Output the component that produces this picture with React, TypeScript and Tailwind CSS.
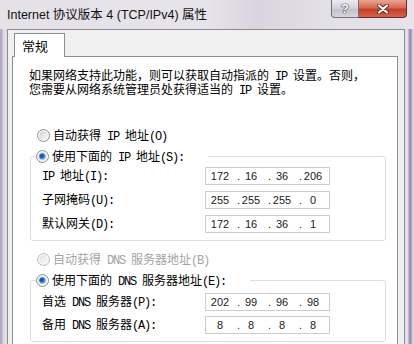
import { useId } from "react";

const ASCII = /^[\x20-\x7e]+$/;

// SimSun-like look: CJK from Noto, ASCII as half-width serif mono
function Mixed({ text }: { text: string }) {
  const parts = text.match(/[\x20-\x7e]+|[^\x20-\x7e]+/g) ?? [];
  return (
    <>
      {parts.map((p, i) =>
        ASCII.test(p) ? (
          <span key={i} className="font-['Liberation_Mono',monospace] text-[12px] tracking-[-1.2px] whitespace-pre">
            {p}
          </span>
        ) : (
          <span key={i}>{p}</span>
        )
      )}
    </>
  );
}

function Radio({ checked = false, disabled = false }: { checked?: boolean; disabled?: boolean }) {
  const id = useId().replace(/:/g, "");
  return (
    <svg width="13" height="13" viewBox="0 0 13 13" className="shrink-0">
      <defs>
        <linearGradient id={`o${id}`} x1="0" y1="0" x2="1" y2="1">
          <stop offset="0" stopColor={disabled ? "#e4e4e4" : "#cfcfcf"} />
          <stop offset="1" stopColor={disabled ? "#f8f8f8" : "#fdfdfd"} />
        </linearGradient>
        <radialGradient id={`d${id}`} cx="0.4" cy="0.4" r="0.6">
          <stop offset="0" stopColor="#0b3f78" />
          <stop offset="0.55" stopColor="#2a74bd" />
          <stop offset="1" stopColor="#8cc4ef" />
        </radialGradient>
      </defs>
      <circle cx="6.5" cy="6.5" r="6" fill="#f6f6f6" stroke={disabled ? "#bcbcbc" : "#8e8f8f"} />
      <circle cx="6.5" cy="6.5" r="4.3" fill={`url(#o${id})`} />
      {checked && <circle cx="6.5" cy="6.5" r="3.3" fill={`url(#d${id})`} />}
    </svg>
  );
}

function IpBox({ ip }: { ip: string[] }) {
  return (
    <div className="flex items-center w-[125px] h-[18px] border border-[#cdcdcd] bg-white pl-[3px] font-['Liberation_Sans',sans-serif] text-[11px] text-[#1a1a1a]">
      {ip.map((v, i) => (
        <div key={i} className="flex">
          <span className="w-[22px] text-center">{v}</span>
          {i < 3 && <span className="w-[9px] text-right">.</span>}
        </div>
      ))}
    </div>
  );
}

function Row({ label, ip }: { label: string; ip: string[] }) {
  return (
    <div className="flex items-center h-[18px]">
      <div className="w-[174px] pl-[11px]">
        <Mixed text={label} />
      </div>
      <IpBox ip={ip} />
    </div>
  );
}

function Group({
  label,
  rows,
  gapClass,
  topClass,
  bottomClass,
}: {
  label: string;
  rows: { label: string; ip: string[] }[];
  gapClass: string;
  topClass: string;
  bottomClass: string;
}) {
  return (
    <fieldset className={`ml-[17px] w-[356px] border border-[#d5dfe5] rounded-[3px] ${bottomClass}`}>
      <legend className="ml-[5px] pr-[24px] h-[15px]">
        <div className="flex items-center gap-[3px] h-[15px] leading-[15px]">
          <Radio checked />
          <span>
            <Mixed text={label} />
          </span>
        </div>
      </legend>
      <div className={`flex flex-col ${gapClass} ${topClass}`}>
        {rows.map((r) => (
          <Row key={r.label} label={r.label} ip={r.ip} />
        ))}
      </div>
    </fieldset>
  );
}

export default function App() {
  return (
    <div className="w-[414px] h-[344px] overflow-hidden flex flex-col bg-[#e2dfe7] font-['Noto_Sans_CJK_SC',sans-serif] text-[12px] text-black">
      {/* Title bar */}
      <div className="flex h-[29px] shrink-0 bg-[linear-gradient(90deg,#e4e1e8_0%,#e6e3ea_50%,#d9d5e0_62%,#e4e0e8_80%,#e8e2ea_100%)]">
        <div className="pl-[7px] pt-[7px] leading-[16px] font-['Liberation_Sans','Noto_Sans_CJK_SC',sans-serif] text-[12.5px] text-[#111]">
          Internet 协议版本 4 (TCP/IPv4) 属性
        </div>
        <div className="ml-auto mr-[7px] flex h-[18px]">
          <div className="w-[28px] h-[18px] flex items-center justify-center border border-[#6f6f78] border-t-0 rounded-bl-[4px] bg-[linear-gradient(180deg,#eceaf0_0%,#d3d1d8_50%,#c3c1c9_55%,#d8d6dc_100%)]">
            <span className="font-['Liberation_Sans',sans-serif] font-bold text-[13px] leading-none text-white [text-shadow:0_0_1px_#333,0_0_1px_#333,0_0_1px_#333]">
              ?
            </span>
          </div>
          <div className="w-[48px] h-[18px] flex items-center justify-center border border-[#6a2c24] border-t-0 border-l-0 rounded-br-[4px] bg-[linear-gradient(180deg,#e9a595_0%,#d66b55_45%,#c23d26_55%,#d8644c_100%)]">
            <svg width="12" height="10" viewBox="0 0 12 10">
              <path d="M2 1.5 L10 8.5 M10 1.5 L2 8.5" stroke="#5a2a25" strokeWidth="4" strokeLinecap="round" />
              <path d="M2 1.5 L10 8.5 M10 1.5 L2 8.5" stroke="#ffffff" strokeWidth="2.2" strokeLinecap="round" />
            </svg>
          </div>
        </div>
      </div>

      {/* Frame + dialog body */}
      <div className="flex flex-1">
        <div className="w-[7px] shrink-0 bg-[linear-gradient(90deg,#b5abc0_0px,#b5abc0_2px,#ddd8e3_3px,#e4e0e8_7px)]" />
        <div className="w-[398px] shrink-0 border border-b-0 border-[#8d8b92] bg-[#f0f0f0] flex flex-col">
          {/* Tab */}
          <div className="pl-[6px] pt-[3px]">
            <div className="relative z-10 w-[51px] h-[24px] -mb-[1px] border border-b-0 border-[#8c8e94] bg-white pl-[7px] pt-[4px] leading-[16px] text-[13px]">
              常规
            </div>
          </div>
          {/* Tab panel */}
          <div className="ml-[4px] w-[386px] flex-1 border border-b-0 border-[#8c8e94] bg-white flex flex-col">
            <p className="mt-[12px] ml-[16px] leading-[12px]">
              <Mixed text="如果网络支持此功能，则可以获取自动指派的 IP 设置。否则，" />
              <br />
              <Mixed text="您需要从网络系统管理员处获得适当的 IP 设置。" />
            </p>

            <div className="mt-[31px] ml-[24px] flex items-center gap-[3px] h-[15px] leading-[15px]">
              <Radio />
              <span>
                <Mixed text="自动获得 IP 地址(O)" />
              </span>
            </div>

            <div className="mt-[6px]">
              <Group
                label="使用下面的 IP 地址(S):"
                gapClass="gap-[6px]"
                topClass="mt-[3px]"
                bottomClass="pb-[7px]"
                rows={[
                  { label: "IP 地址(I):", ip: ["172", "16", "36", "206"] },
                  { label: "子网掩码(U):", ip: ["255", "255", "255", "0"] },
                  { label: "默认网关(D):", ip: ["172", "16", "36", "1"] },
                ]}
              />
            </div>

            <div className="mt-[11px] ml-[24px] flex items-center gap-[3px] h-[15px] leading-[15px] text-[#a3a3a3]">
              <Radio disabled />
              <span>
                <Mixed text="自动获得 DNS 服务器地址(B)" />
              </span>
            </div>

            <div className="mt-[6px]">
              <Group
                label="使用下面的 DNS 服务器地址(E):"
                gapClass="gap-[5px]"
                topClass="mt-[5px]"
                bottomClass="pb-[7px]"
                rows={[
                  { label: "首选 DNS 服务器(P):", ip: ["202", "99", "96", "98"] },
                  { label: "备用 DNS 服务器(A):", ip: ["8", "8", "8", "8"] },
                ]}
              />
            </div>
          </div>
        </div>
        <div className="w-[9px] shrink-0 bg-[linear-gradient(90deg,#e6e2ea_0px,#e2dde8_3px,#a896ba_4px,#9a86ae_6px,#cfc6d8_7px,#e0dae6_9px)]" />
      </div>
    </div>
  );
}
